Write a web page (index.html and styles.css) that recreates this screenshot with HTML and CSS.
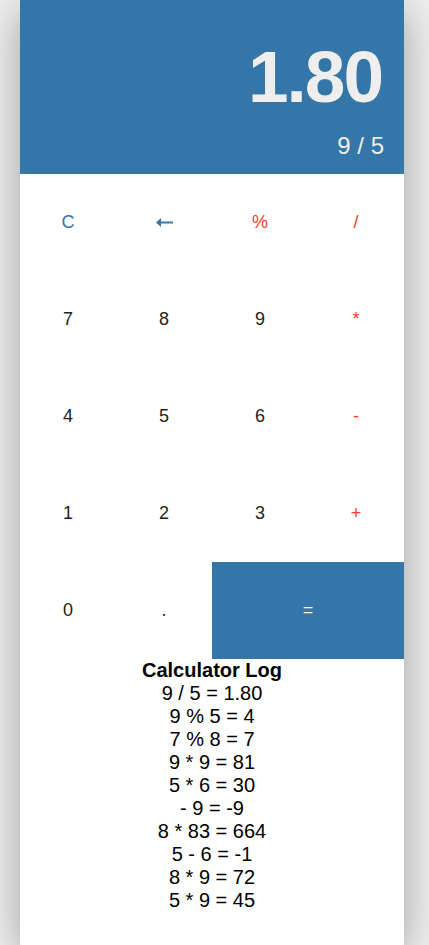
FILE: index.html
```html
<!DOCTYPE html>
<html>
<head>
<meta charset="utf-8">
<link rel="stylesheet" href="styles.css">
</head>
<body>
<div class="calc">
  <div class="display">
    <div class="result">1.80</div>
    <div class="expr">9 / 5</div>
  </div>
  <div class="keys">
    <div class="key blue">C</div>
    <div class="key blue" aria-label="←"><svg class="arrow" width="17" height="9" viewBox="0 0 17 9"><path d="M0 4.5 L5 0 L5 9 Z" fill="#3476a8"/><rect x="4" y="3.5" width="13" height="2" fill="#3476a8"/></svg></div>
    <div class="key red">%</div>
    <div class="key red">/</div>
    <div class="key">7</div>
    <div class="key">8</div>
    <div class="key">9</div>
    <div class="key red">*</div>
    <div class="key">4</div>
    <div class="key">5</div>
    <div class="key">6</div>
    <div class="key red">-</div>
    <div class="key">1</div>
    <div class="key">2</div>
    <div class="key">3</div>
    <div class="key red">+</div>
    <div class="key">0</div>
    <div class="key">.</div>
    <div class="key equals">=</div>
  </div>
  <div class="log">
    <div class="log-title">Calculator Log</div>
    <div>9 / 5 = 1.80</div>
    <div>9 % 5 = 4</div>
    <div>7 % 8 = 7</div>
    <div>9 * 9 = 81</div>
    <div>5 * 6 = 30</div>
    <div>- 9 = -9</div>
    <div>8 * 83 = 664</div>
    <div>5 - 6 = -1</div>
    <div>8 * 9 = 72</div>
    <div>5 * 9 = 45</div>
  </div>
</div>
</body>
</html>
```
FILE: styles.css
```css
html, body {
  margin: 0;
  padding: 0;
}
body {
  background: #f0f0f0;
  font-family: "Liberation Sans", Arial, sans-serif;
}
.calc {
  width: 384px;
  margin-left: 20px;
  min-height: 100vh;
  background: #fff;
  box-shadow: 0 10px 40px rgba(0, 0, 0, 0.35);
}
.display {
  background: #3476a8;
  color: #eeeeee;
  height: 174px;
  box-sizing: border-box;
  padding: 40px 22px 15px 20px;
  display: flex;
  flex-direction: column;
  align-items: flex-end;
}
.result {
  font-size: 73px;
  font-weight: bold;
  line-height: 1;
  letter-spacing: -2px;
}
.expr {
  font-size: 24px;
  line-height: 1;
  margin-top: 21px;
  margin-right: -2px;
}
.keys {
  display: grid;
  grid-template-columns: repeat(4, 96px);
  grid-auto-rows: 97px;
}
.key {
  display: flex;
  align-items: center;
  justify-content: center;
  font-size: 18px;
  color: #222;
}
.key.blue {
  color: #3476a8;
}
.key.red {
  color: #ff3b2f;
}
.key.equals {
  grid-column: span 2;
  background: #3476a8;
  color: #eeeeee;
}
.arrow {
  display: block;
}
.log {
  text-align: center;
  font-size: 20px;
  color: #000;
  padding-bottom: 20px;
}
.log-title {
  font-weight: bold;
}
```
